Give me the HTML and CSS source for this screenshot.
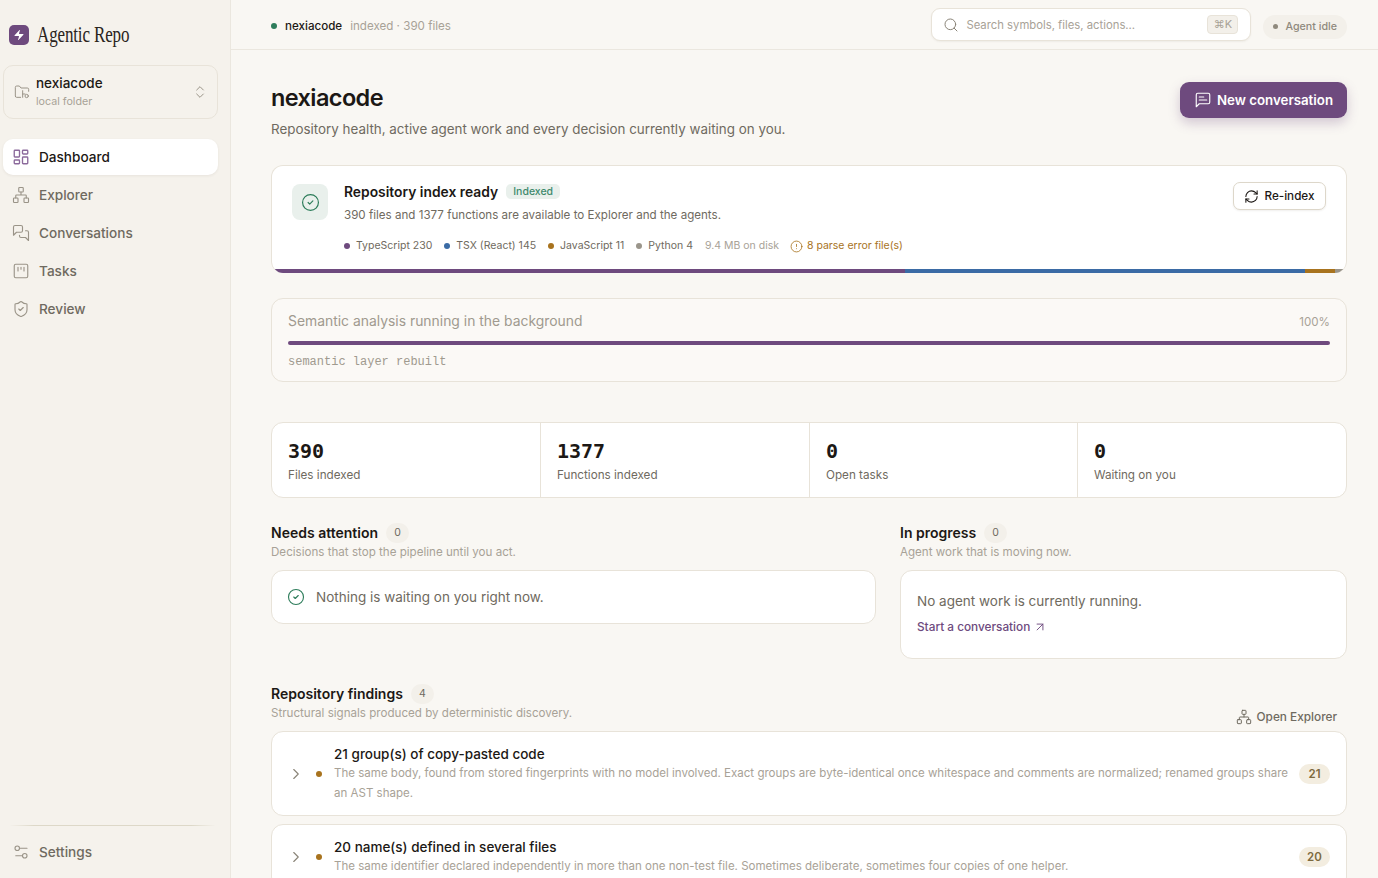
FILE: index.html
```
<!DOCTYPE html>
<html lang="en">
<head>
<meta charset="utf-8">
<title>Agentic Repo</title>
<link rel="stylesheet" href="styles.css">
</head>
<body>
<svg class="defs" aria-hidden="true">
<symbol id="i-dash" viewBox="0 0 24 24"><rect x="3" y="3" width="7" height="9" rx="1"/><rect x="14" y="3" width="7" height="5" rx="1"/><rect x="14" y="12" width="7" height="9" rx="1"/><rect x="3" y="16" width="7" height="5" rx="1"/></symbol>
<symbol id="i-net" viewBox="0 0 24 24"><rect x="16" y="16" width="6" height="6" rx="1"/><rect x="2" y="16" width="6" height="6" rx="1"/><rect x="9" y="2" width="6" height="6" rx="1"/><path d="M5 16v-3a1 1 0 0 1 1-1h12a1 1 0 0 1 1 1v3M12 12V8"/></symbol>
<symbol id="i-msgs" viewBox="0 0 24 24"><path d="M14 9a2 2 0 0 1-2 2H6l-4 4V4a2 2 0 0 1 2-2h8a2 2 0 0 1 2 2z"/><path d="M18 9h2a2 2 0 0 1 2 2v11l-4-4h-6a2 2 0 0 1-2-2v-1"/></symbol>
<symbol id="i-kanban" viewBox="0 0 24 24"><rect x="3" y="3" width="18" height="18" rx="2"/><path d="M8 7v5M12 7v2.500M16 7v5"/></symbol>
<symbol id="i-shield" viewBox="0 0 24 24"><path d="M20 13c0 5-3.500 7.500-7.660 8.950a1 1 0 0 1-.670-.010C7.500 20.500 4 18 4 13V6a1 1 0 0 1 1-1c2 0 4.500-1.200 6.240-2.720a1.170 1.170 0 0 1 1.520 0C14.510 3.810 17 5 19 5a1 1 0 0 1 1 1z"/><path d="m9 12 2 2 4-4"/></symbol>
<symbol id="i-settings" viewBox="0 0 24 24"><path d="M20 7h-9M14 17H5"/><circle cx="17" cy="17" r="3"/><circle cx="7" cy="7" r="3"/></symbol>
<symbol id="i-search" viewBox="0 0 24 24"><circle cx="11" cy="11" r="8"/><path d="m21 21-4.300-4.300"/></symbol>
<symbol id="i-updown" viewBox="0 0 24 24"><path d="m7 15 5 5 5-5M7 9l5-5 5 5"/></symbol>
<symbol id="i-msg" viewBox="0 0 24 24"><path d="M21 15a2 2 0 0 1-2 2H7l-4 4V5a2 2 0 0 1 2-2h14a2 2 0 0 1 2 2z"/><path d="M13 8H7M17 12H7"/></symbol>
<symbol id="i-check" viewBox="0 0 24 24"><circle cx="12" cy="12" r="10"/><path d="m9 12 2 2 4-4"/></symbol>
<symbol id="i-refresh" viewBox="0 0 24 24"><path d="M3 12a9 9 0 0 1 9-9 9.750 9.750 0 0 1 6.740 2.740L21 8"/><path d="M21 3v5h-5"/><path d="M21 12a9 9 0 0 1-9 9 9.750 9.750 0 0 1-6.740-2.740L3 16"/><path d="M8 16H3v5"/></symbol>
<symbol id="i-alert" viewBox="0 0 24 24"><circle cx="12" cy="12" r="10"/><path d="M12 8v4M12 16h.010"/></symbol>
<symbol id="i-arrow" viewBox="0 0 24 24"><path d="M7 7h10v10M7 17 17 7"/></symbol>
<symbol id="i-chev" viewBox="0 0 24 24"><path d="m9 18 6-6-6-6"/></symbol>
<symbol id="i-folder" viewBox="0 0 24 24"><path d="M10 20H4a2 2 0 0 1-2-2V5a2 2 0 0 1 2-2h4l2.500 3H20a2 2 0 0 1 2 2v3"/><circle cx="19" cy="18" r="2.500"/><path d="M13 10v10M13 15h3.500"/></symbol>
</svg>

<div class="app">
  <aside class="sidebar">
    <div class="brand">
      <span class="logo"><svg class="logo-bolt" viewBox="0 0 24 24"><path d="M4 14a1 1 0 0 1-.780-1.630l9.900-10.200a.500.500 0 0 1 .860.460l-1.920 6.020A1 1 0 0 0 13 10h7a1 1 0 0 1 .780 1.630l-9.900 10.200a.500.500 0 0 1-.860-.460l1.920-6.020A1 1 0 0 0 11 14z"/></svg></span>
      <span class="brand-name">Agentic Repo</span>
    </div>
    <div class="repo">
      <svg class="ic ic-repo"><use href="#i-folder"/></svg>
      <div class="repo-text">
        <div class="repo-name">nexiacode</div>
        <div class="repo-kind">local folder</div>
      </div>
      <svg class="ic ic-updown"><use href="#i-updown"/></svg>
    </div>
    <nav class="nav">
      <a class="nav-item active"><svg class="ic"><use href="#i-dash"/></svg>Dashboard</a>
      <a class="nav-item"><svg class="ic"><use href="#i-net"/></svg>Explorer</a>
      <a class="nav-item"><svg class="ic"><use href="#i-msgs"/></svg>Conversations</a>
      <a class="nav-item"><svg class="ic"><use href="#i-kanban"/></svg>Tasks</a>
      <a class="nav-item"><svg class="ic"><use href="#i-shield"/></svg>Review</a>
    </nav>
    <div class="side-foot">
      <a class="nav-item"><svg class="ic"><use href="#i-settings"/></svg>Settings</a>
    </div>
  </aside>

  <div class="content">
    <header class="topbar">
      <span class="status-dot"></span>
      <span class="top-repo">nexiacode</span>
      <span class="top-meta">indexed · 390 files</span>
      <div class="search">
        <svg class="ic ic-search"><use href="#i-search"/></svg>
        <span class="search-text">Search symbols, files, actions…</span>
        <kbd class="kbd">⌘K</kbd>
      </div>
      <div class="agent"><span class="agent-dot"></span>Agent idle</div>
    </header>

    <main class="main">
      <div class="page-head">
        <div>
          <h1 class="title">nexiacode</h1>
          <p class="subtitle">Repository health, active agent work and every decision currently waiting on you.</p>
        </div>
        <button class="btn-primary"><svg class="ic ic-msg"><use href="#i-msg"/></svg>New conversation</button>
      </div>

      <section class="index-card">
        <div class="index-body">
          <div class="index-icon"><svg class="ic ic-check-lg"><use href="#i-check"/></svg></div>
          <div class="index-info">
            <div class="index-title-row">
              <span class="index-title">Repository index ready</span>
              <span class="tag">Indexed</span>
            </div>
            <div class="index-desc">390 files and 1377 functions are available to Explorer and the agents.</div>
            <div class="langs">
              <span class="lang"><i class="dot purple"></i>TypeScript 230</span>
              <span class="lang"><i class="dot blue"></i>TSX (React) 145</span>
              <span class="lang"><i class="dot amber"></i>JavaScript 11</span>
              <span class="lang"><i class="dot grey"></i>Python 4</span>
              <span class="disk">9.4 MB on disk</span>
              <span class="errors"><svg class="ic ic-alert"><use href="#i-alert"/></svg>8 parse error file(s)</span>
            </div>
          </div>
          <button class="btn-ghost"><svg class="ic ic-refresh"><use href="#i-refresh"/></svg>Re-index</button>
        </div>
        <div class="lang-bar">
          <span class="seg purple" style="flex-grow:230"></span>
          <span class="seg blue" style="flex-grow:145"></span>
          <span class="seg amber" style="flex-grow:11"></span>
          <span class="seg grey" style="flex-grow:4"></span>
        </div>
      </section>

      <section class="semantic">
        <div class="semantic-head">
          <span class="semantic-title">Semantic analysis running in the background</span>
          <span class="semantic-pct">100%</span>
        </div>
        <div class="progress"></div>
        <div class="semantic-note">semantic layer rebuilt</div>
      </section>

      <section class="stats">
        <div class="stat"><div class="stat-num">390</div><div class="stat-label">Files indexed</div></div>
        <div class="stat"><div class="stat-num">1377</div><div class="stat-label">Functions indexed</div></div>
        <div class="stat"><div class="stat-num">0</div><div class="stat-label">Open tasks</div></div>
        <div class="stat"><div class="stat-num">0</div><div class="stat-label">Waiting on you</div></div>
      </section>

      <section class="columns">
        <div>
          <div class="sec-head"><h2 class="sec-title">Needs attention</h2><span class="count">0</span></div>
          <p class="sec-sub">Decisions that stop the pipeline until you act.</p>
          <div class="panel panel-row"><svg class="ic ic-check-md"><use href="#i-check"/></svg>Nothing is waiting on you right now.</div>
        </div>
        <div>
          <div class="sec-head"><h2 class="sec-title">In progress</h2><span class="count">0</span></div>
          <p class="sec-sub">Agent work that is moving now.</p>
          <div class="panel panel-col">
            <div>No agent work is currently running.</div>
            <a class="link">Start a conversation<svg class="ic ic-arrow"><use href="#i-arrow"/></svg></a>
          </div>
        </div>
      </section>

      <section class="findings">
        <div class="findings-head">
          <div>
            <div class="sec-head"><h2 class="sec-title">Repository findings</h2><span class="count">4</span></div>
            <p class="sec-sub">Structural signals produced by deterministic discovery.</p>
          </div>
          <a class="open-explorer"><svg class="ic ic-net"><use href="#i-net"/></svg>Open Explorer</a>
        </div>
        <article class="finding">
          <svg class="ic ic-chev"><use href="#i-chev"/></svg>
          <i class="dot amber finding-dot"></i>
          <div class="finding-text">
            <div class="finding-title">21 group(s) of copy-pasted code</div>
            <div class="finding-desc">The same body, found from stored fingerprints with no model involved. Exact groups are byte-identical once whitespace and comments are normalized; renamed groups share an AST shape.</div>
          </div>
          <span class="finding-count">21</span>
        </article>
        <article class="finding">
          <svg class="ic ic-chev"><use href="#i-chev"/></svg>
          <i class="dot amber finding-dot"></i>
          <div class="finding-text">
            <div class="finding-title">20 name(s) defined in several files</div>
            <div class="finding-desc">The same identifier declared independently in more than one non-test file. Sometimes deliberate, sometimes four copies of one helper.</div>
          </div>
          <span class="finding-count">20</span>
        </article>
      </section>
    </main>
  </div>
</div>
</body>
</html>
```
FILE: styles.css
```
* { box-sizing: border-box; }
html, body { margin: 0; height: 100%; overflow: hidden; }
body {
  font-family: Inter, "Noto Sans", "Liberation Sans", sans-serif;
  background: #f9f7f3;
  color: #1c1815;
}
.defs { position: absolute; width: 0; height: 0; }
.ic { width: 16px; height: 16px; fill: none; stroke: currentColor; stroke-width: 1.6; stroke-linecap: round; stroke-linejoin: round; flex: none; }
.app { display: flex; height: 878px; }

/* sidebar */
.sidebar { width: 231px; flex: none; background: #f5f2ec; border-right: 1px solid #ebe7df; padding: 0 12px 0 3px; display: flex; flex-direction: column; }
.brand { display: flex; align-items: center; height: 65px; padding: 5px 0 0 6px; gap: 8px; }
.logo { width: 20px; height: 20px; border-radius: 5px; background: #6e4a7e; display: flex; align-items: center; justify-content: center; flex: none; }
.logo-bolt { width: 12px; height: 12px; fill: #fff; }
.brand-name { font-family: "Liberation Serif", serif; font-size: 23px; letter-spacing: -.2px; color: #2a2420; transform: scaleX(.74); transform-origin: left center; white-space: nowrap; }
.repo { height: 54px; border: 1px solid #e8e3d9; border-radius: 10px; display: flex; align-items: center; padding: 0 9px 0 10px; gap: 6px; }
.ic-repo { width: 16px; height: 16px; color: #9a9488; stroke-width: 1.5; }
.repo-text { flex: 1; }
.repo-name { font-size: 13.500px; font-weight: 500; line-height: 18px; color: #1c1815; }
.repo-kind { font-size: 10.700px; line-height: 16px; margin-top: 2px; color: #a8a297; }
.ic-updown { width: 16px; height: 16px; color: #9a9488; stroke-width: 1.500; }
.nav { display: flex; flex-direction: column; gap: 2px; margin-top: 20px; }
.nav-item { height: 36px; display: flex; align-items: center; gap: 9px; padding: 0 10px 0 9px; font-size: 13.600px; font-weight: 500; color: #6f6a60; border-radius: 10px; }
.nav-item .ic { width: 18px; height: 18px; color: #9a9488; stroke-width: 1.500; }
.nav-item.active { background: #fff; color: #1c1815; box-shadow: 0 1px 3px rgba(60, 45, 30, .07); }
.nav-item.active .ic { color: #8c6a9c; stroke-width: 1.800; }
.side-foot { margin: auto 3px 8px 7px; padding-top: 8px; border-top: 1px solid; border-image: linear-gradient(90deg, transparent, #ddd8c8 12%, #ddd8c8 88%, transparent) 1; }
.side-foot .nav-item { margin-left: -7px; }

/* topbar */
.content { flex: 1; min-width: 0; display: flex; flex-direction: column; }
.topbar { height: 50px; flex: none; border-bottom: 1px solid #ebe7df; display: flex; align-items: center; padding: 2px 31px 0 40px; font-size: 11.600px; }
.status-dot { width: 6px; height: 6px; border-radius: 50%; background: #2e7d5b; margin-right: 8px; }
.top-repo { font-weight: 500; color: #1c1815; margin-right: 8px; }
.top-meta { color: #a8a297; }
.search { margin-left: auto; margin-top: -2px; width: 320px; height: 33px; background: #fff; border: 1px solid #e8e3d9; border-radius: 9px; display: flex; align-items: center; padding: 0 12px 0 11px; gap: 7px; box-shadow: 0 1px 2px rgba(60, 45, 30, .06); }
.ic-search { width: 16px; height: 16px; color: #8a8478; stroke-width: 1.500; }
.search-text { flex: 1; color: #a8a297; font-size: 11.300px; }
.kbd { font-family: Inter, sans-serif; font-size: 11px; color: #a8a297; background: #f3f0ea; border: 1px solid #e8e3d9; border-radius: 4px; width: 31px; text-align: center; height: 19px; line-height: 17px; }
.agent { margin-left: 12px; margin-top: 2px; height: 24px; padding: 0 10px; border-radius: 12px; background: #f3f0ea; color: #8f897d; font-size: 10.700px; font-weight: 500; display: flex; align-items: center; gap: 7px; }
.agent-dot { width: 5px; height: 5px; border-radius: 50%; background: #8f897d; }

/* main */
.main { flex: 1; min-height: 0; overflow: hidden; padding: 32px 31px 0 40px; }
.page-head { display: flex; justify-content: space-between; align-items: flex-start; height: 83px; }
.title { margin: 0; font-size: 23.500px; font-weight: 600; line-height: 32px; letter-spacing: -.6px; }
.subtitle { margin: 5px 0 0; font-size: 13.400px; line-height: 20px; color: #6f6a60; }
.btn-primary { width: 167px; height: 36px; border: 0; border-radius: 9px; background: #6e4a7e; color: #fff; font: 600 13.300px Inter, sans-serif; display: flex; align-items: center; justify-content: center; gap: 5px; box-shadow: 0 5px 12px rgba(110, 74, 126, .28); }
.ic-msg { width: 18px; height: 18px; stroke-width: 1.5; }

/* index card */
.index-card { height: 108px; background: #fff; border: 1px solid #e8e3d9; border-bottom: 0; border-radius: 12px; overflow: hidden; display: flex; flex-direction: column; }
.index-body { flex: 1; display: flex; align-items: flex-start; padding: 16px 20px 0; }
.index-icon { width: 36px; height: 36px; margin-top: 2px; border-radius: 8px; background: #e9f0ec; color: #2e7d5b; display: flex; align-items: center; justify-content: center; flex: none; }
.ic-check-lg { width: 19px; height: 19px; stroke-width: 1.500; }
.index-info { flex: 1; margin-left: 16px; }
.index-title-row { display: flex; align-items: center; gap: 8px; height: 20px; }
.index-title { font-size: 13.850px; font-weight: 600; }
.tag { font-size: 10.500px; font-weight: 500; color: #3f8a6c; background: #e9f0ec; border-radius: 5px; padding: 0 7px; height: 15px; line-height: 15px; margin-top: -1px; }
.index-desc { font-size: 11.600px; color: #6f6a60; margin-top: 5px; line-height: 16px; }
.langs { display: flex; align-items: center; margin-top: 15px; font-size: 10.500px; color: #6f6a60; line-height: 16px; }
.lang { display: flex; align-items: center; margin-right: 12px; }
.dot { width: 6px; height: 6px; border-radius: 50%; margin-right: 6px; flex: none; display: block; }
.purple { background: #6e4a7e; }
.blue { background: #3b6ba5; }
.amber { background: #a8731e; }
.grey { background: #9a958b; }
.disk { color: #a8a297; margin-right: 11px; }
.errors { display: flex; align-items: center; gap: 4px; color: #a8731e; }
.ic-alert { width: 13px; height: 13px; stroke-width: 1.500; }
.btn-ghost { height: 28px; width: 93px; background: #fff; border: 1px solid #ddd7ca; border-radius: 7px; font: 500 11.700px Inter, sans-serif; color: #1c1815; display: flex; align-items: center; justify-content: center; gap: 5px; box-shadow: 0 1px 2px rgba(60, 45, 30, .08); }
.ic-refresh { width: 15px; height: 15px; stroke-width: 1.700; }
.lang-bar { display: flex; height: 4px; flex: none; }
.seg { display: block; flex: 0 1 0; }

/* semantic */
.semantic { height: 84px; margin-top: 25px; background: #fbf9f6; border: 1px solid #e8e3d9; border-radius: 12px; padding: 12px 16px 0; }
.semantic-head { display: flex; justify-content: space-between; align-items: center; height: 20px; }
.semantic-title { font-size: 13.900px; font-weight: 400; color: #a09a8f; }
.semantic-pct { font-size: 11.600px; color: #a8a297; margin-top: 2px; }
.progress { height: 4px; border-radius: 2px; background: #6e4a7e; margin-top: 10px; }
.semantic-note { font-family: "Liberation Mono", monospace; font-size: 12px; color: #a09a8f; margin-top: 9px; line-height: 16px; }

/* stats */
.stats { height: 76px; margin-top: 40px; display: grid; grid-template-columns: 269px 269px 268px 1fr; background: #fff; border: 1px solid #e8e3d9; border-radius: 12px; }
.stat { padding: 16px 16px 0; border-right: 1px solid #e8e3d9; }
.stat:last-child { border-right: 0; }
.stat-num { font-family: "DejaVu Sans Mono", monospace; font-weight: 700; font-size: 20px; line-height: 24px; }
.stat-label { font-size: 11.700px; color: #6f6a60; line-height: 16px; margin-top: 4px; }

/* columns */
.columns { display: grid; grid-template-columns: 605px 1fr; gap: 24px; margin-top: 24px; align-items: start; }
.sec-head { display: flex; align-items: center; height: 21px; gap: 8px; }
.sec-title { margin: -1px 0 0; font-size: 14px; font-weight: 600; }
.count { min-width: 23px; height: 20px; border-radius: 10px; background: #f3f0ea; color: #6f6a60; font-size: 10.500px; display: flex; align-items: center; justify-content: center; }
.sec-sub { margin: 1px 0 0; font-size: 11.600px; line-height: 16px; color: #a8a297; }
.panel { margin-top: 10px; background: #fff; border: 1px solid #e8e3d9; border-radius: 12px; font-size: 13.500px; color: #6f6a60; }
.panel-row { height: 54px; display: flex; align-items: center; padding: 0 15px; gap: 11px; }
.ic-check-md { width: 18px; height: 18px; color: #2e7d5b; stroke-width: 1.500; }
.panel-col { height: 89px; padding: 20px 16px 0; line-height: 20px; }
.link { display: flex; align-items: center; gap: 3px; margin-top: 8px; font-size: 11.800px; color: #6e4a7e; font-weight: 500; line-height: 16px; }
.ic-arrow { width: 14px; height: 14px; stroke-width: 1.600; }

/* findings */
.findings { margin-top: 24px; }
.findings-head { display: flex; justify-content: space-between; align-items: flex-end; }
.open-explorer { display: flex; align-items: center; gap: 5px; font-size: 11.800px; font-weight: 500; color: #6f6a60; margin-right: 10px; margin-bottom: -4px; line-height: 16px; }
.ic-net { width: 16px; height: 16px; stroke-width: 1.500; }
.finding { margin-top: 8px; background: #fff; border: 1px solid #e8e3d9; border-radius: 12px; display: flex; align-items: center; padding: 12px 16px 12px 15px; }
.findings-head + .finding { margin-top: 10px; }
.ic-chev { width: 18px; height: 18px; color: #8a8478; stroke-width: 1.500; }
.finding-dot { margin: 0 0 0 11px; }
.finding-text { flex: 1; margin-left: 12px; }
.finding-title { font-size: 13.500px; font-weight: 500; line-height: 21px; margin-bottom: -2px; }
.finding-desc { font-size: 11.540px; line-height: 20px; color: #a8a297; }
.finding-count { width: 31px; height: 20px; margin-left: 9px; border-radius: 10px; background: #f3ede0; color: #7d6a3f; font-size: 11.500px; font-weight: 600; display: flex; align-items: center; justify-content: center; flex: none; }
```
